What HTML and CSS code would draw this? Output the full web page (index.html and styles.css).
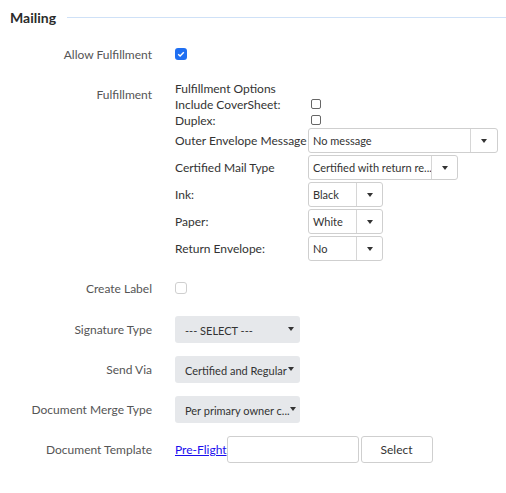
FILE: index.html
```html
<!DOCTYPE html>
<html lang="en">
<head>
    <meta charset="UTF-8">
    <meta name="viewport" content="width=device-width, initial-scale=1.0">
    <title>Mailing</title>
    <link rel="stylesheet" href="styles.css">
</head>

<body>
    <div class="section">
        <div class="section-head">
            <h2 class="section-title">Mailing</h2>
            <div class="section-line"></div>
        </div>

        <div class="form-row row-allow">
            <div class="form-label">Allow Fulfillment</div>
            <div class="form-field">
                <span class="check checked">
                    <svg width="12" height="12" viewBox="0 0 12 12"><path d="M3.2 6.2 5.1 8 8.8 4.2" fill="none" stroke="#fff" stroke-width="1.4"/></svg>
                </span>
            </div>
        </div>

        <div class="form-row row-fulfillment">
            <div class="form-label label-top">Fulfillment</div>
            <div class="form-field options">
                <div class="opt-line">Fulfillment Options</div>
                <div class="opt-line">
                    <span class="opt-name">Include CoverSheet:</span>
                    <span class="mini-check"></span>
                </div>
                <div class="opt-line">
                    <span class="opt-name">Duplex:</span>
                    <span class="mini-check"></span>
                </div>

                <div class="opt-row">
                    <span class="opt-name">Outer Envelope Message</span>
                    <div class="box-select w-wide">
                        <span class="box-value">No message</span>
                        <span class="box-arrow wide"><i class="caret"></i></span>
                    </div>
                </div>
                <div class="opt-row">
                    <span class="opt-name">Certified Mail Type</span>
                    <div class="box-select w-mid">
                        <span class="box-value">Certified with return re...</span>
                        <span class="box-arrow"><i class="caret"></i></span>
                    </div>
                </div>
                <div class="opt-row">
                    <span class="opt-name">Ink:</span>
                    <div class="box-select w-small">
                        <span class="box-value">Black</span>
                        <span class="box-arrow"><i class="caret"></i></span>
                    </div>
                </div>
                <div class="opt-row">
                    <span class="opt-name">Paper:</span>
                    <div class="box-select w-small">
                        <span class="box-value">White</span>
                        <span class="box-arrow"><i class="caret"></i></span>
                    </div>
                </div>
                <div class="opt-row">
                    <span class="opt-name">Return Envelope:</span>
                    <div class="box-select w-small">
                        <span class="box-value">No</span>
                        <span class="box-arrow"><i class="caret"></i></span>
                    </div>
                </div>
            </div>
        </div>

        <div class="form-row row-label">
            <div class="form-label">Create Label</div>
            <div class="form-field">
                <span class="check"></span>
            </div>
        </div>

        <div class="form-row row-select first">
            <div class="form-label">Signature Type</div>
            <div class="form-field">
                <div class="gray-select">
                    <span class="gray-value">--- SELECT ---</span>
                    <i class="caret"></i>
                </div>
            </div>
        </div>

        <div class="form-row row-select">
            <div class="form-label">Send Via</div>
            <div class="form-field">
                <div class="gray-select">
                    <span class="gray-value">Certified and Regular</span>
                    <i class="caret"></i>
                </div>
            </div>
        </div>

        <div class="form-row row-select">
            <div class="form-label">Document Merge Type</div>
            <div class="form-field">
                <div class="gray-select">
                    <span class="gray-value">Per primary owner c...</span>
                    <i class="caret"></i>
                </div>
            </div>
        </div>

        <div class="form-row row-select">
            <div class="form-label">Document Template</div>
            <div class="form-field">
                <a href="#" class="link">Pre-Flight</a>
                <input type="text" class="text-input">
                <button class="btn">Select</button>
            </div>
        </div>
    </div>
</body>
</html>
```

FILE: styles.css
```css
body {
  margin: 0;
  font-family: "Lato", "Noto Sans", sans-serif;
  color: #333;
  background: #fff;
}

.section {
  padding: 7px 0 0 10px;
}

.section-head {
  display: flex;
  align-items: center;
  height: 20px;
}

.section-title {
  margin: 0;
  font-size: 14px;
  font-weight: bold;
  color: #2b2b2b;
}

.section-line {
  flex: 1;
  height: 1px;
  margin-left: 11px;
  background: #cfe1f7;
}

.form-row {
  display: flex;
  align-items: center;
}

.form-label {
  width: 142px;
  margin-right: 23px;
  text-align: right;
  font-size: 12px;
  color: #555;
}

.form-field {
  display: flex;
  align-items: center;
}

.row-allow {
  height: 24px;
  margin-top: 15px;
}

.row-fulfillment {
  align-items: flex-start;
  margin-top: 14px;
}

.label-top {
  padding-top: 7px;
  line-height: 16px;
}

.options {
  display: block;
  font-size: 12px;
  color: #333;
}

.opt-line {
  display: flex;
  align-items: center;
  height: 16px;
}

.opt-name {
  width: 133px;
  flex-shrink: 0;
  white-space: nowrap;
}

.opt-row {
  display: flex;
  align-items: flex-start;
  height: 27px;
}

.opt-row .opt-name {
  line-height: 25px;
}

.row-label {
  height: 24px;
  margin-top: 13px;
}

.row-select {
  height: 27px;
  margin-top: 13px;
}

.row-select.first {
  margin-top: 16px;
}

/* checkboxes */
.check {
  display: inline-block;
  width: 12px;
  height: 12px;
  box-sizing: border-box;
  border: 1px solid #cfcfcf;
  border-radius: 3px;
  background: #fff;
}

.check.checked {
  border: none;
  background: #1f6ff2;
}

.check svg {
  display: block;
}

.mini-check {
  display: inline-block;
  width: 10px;
  height: 10px;
  box-sizing: border-box;
  border: 1px solid #666;
  border-radius: 2px;
  margin-left: 3px;
}

/* boxed selects */
.box-select {
  display: flex;
  height: 25px;
  box-sizing: border-box;
  border: 1px solid #cfcfcf;
  border-radius: 3px;
  background: #fff;
  font-size: 11px;
}

.w-wide {
  width: 190px;
}

.w-mid {
  width: 150px;
}

.w-small {
  width: 75px;
}

.box-value {
  flex: 1;
  padding-left: 4px;
  line-height: 23px;
  white-space: nowrap;
  overflow: hidden;
}

.box-arrow {
  width: 25px;
  display: flex;
  align-items: center;
  justify-content: center;
  border-left: 1px solid #d6d6d6;
}

.box-arrow.wide {
  width: 26px;
}

.caret {
  display: inline-block;
  flex-shrink: 0;
  width: 0;
  height: 0;
  border-left: 3px solid transparent;
  border-right: 3px solid transparent;
  border-top: 4px solid #333;
}

/* gray selects */
.gray-select {
  display: flex;
  align-items: center;
  width: 125px;
  height: 27px;
  box-sizing: border-box;
  padding: 0 6px 0 10px;
  border-radius: 3px;
  background: #e6e8eb;
  font-size: 11px;
  color: #333;
}

.gray-value {
  flex: 1;
  white-space: nowrap;
  padding-top: 1px;
}

.gray-select .caret {
  margin-top: -2px;
}

/* template row */
.link {
  font-size: 12px;
  color: #1a0dee;
  text-decoration: underline;
}

.text-input {
  width: 132px;
  height: 27px;
  box-sizing: border-box;
  margin: 0;
  border: 1px solid #cfcfcf;
  border-radius: 3px;
  background: #fff;
}

.btn {
  width: 72px;
  height: 27px;
  box-sizing: border-box;
  margin: 0 0 0 2px;
  border: 1px solid #cfcfcf;
  border-radius: 3px;
  background: #fff;
  font-family: inherit;
  font-size: 12px;
  color: #333;
}
```
